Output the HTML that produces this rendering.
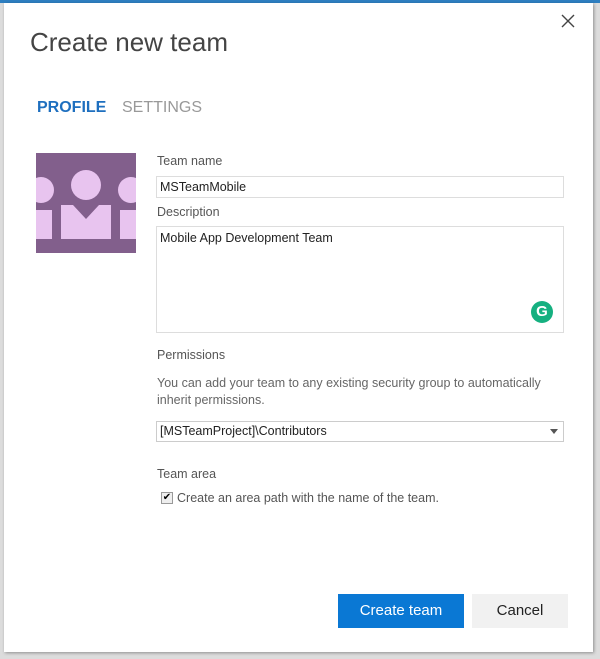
<!DOCTYPE html>
<html><head><style>
body{margin:0;width:600px;height:659px;background:#dcdcdc;position:relative;overflow:hidden;font-family:"Segoe UI","Liberation Sans",sans-serif;}
.topbar{position:absolute;left:0;top:0;width:600px;height:3px;background:#2e7fc1}
.dlg{position:absolute;left:4px;top:3px;width:589px;height:649px;background:#fff;box-shadow:1px 1px 3px rgba(0,0,0,.35)}
.a{position:absolute;white-space:nowrap}
.lbl{font-size:12.5px;color:#555}
.inp{position:absolute;border:1px solid #ddd;background:#fff;font-size:12.5px;color:#222;box-sizing:border-box;padding-left:3px}
</style></head><body>
<div class="topbar"></div>
<div class="dlg">
<div class="a" style="left:26px;top:24px;font-size:26px;color:#444;font-weight:300">Create new team</div>
<svg class="a" style="left:557px;top:11px" width="14" height="14"><path d="M1 1L13 13M13 1L1 13" stroke="#444" stroke-width="1.4"/></svg>
<div class="a" style="left:33px;top:96px;font-size:16px;color:#1e6fbf;font-weight:bold">PROFILE</div>
<div class="a" style="left:118px;top:96px;font-size:16px;color:#999">SETTINGS</div>
<svg class="a" style="left:32px;top:150px" width="100" height="100"><rect width="100" height="100" fill="#825f8c"/>
<g fill="#e8c4ef"><circle cx="50" cy="32" r="15"/><path d="M25 52H75V86H25Z" fill="#e8c4ef"/><path d="M37 52L50 66L63 52Z" fill="#825f8c"/>
<circle cx="5" cy="37" r="13"/><rect x="0" y="57" width="16" height="29"/><circle cx="95" cy="37" r="13"/><rect x="84" y="57" width="16" height="29"/></g>
<path d="M0 50L8 57H0Z M100 50L92 57H100Z" fill="#825f8c"/></svg>
<div class="a lbl" style="left:153px;top:151px">Team name</div>
<div class="inp" style="left:152px;top:173px;width:408px;height:22px;line-height:20px">MSTeamMobile</div>
<div class="a lbl" style="left:153px;top:202px">Description</div>
<div class="inp" style="left:152px;top:223px;width:408px;height:107px;padding-top:4px">Mobile App Development Team</div>
<div class="a" style="left:527px;top:298px;width:22px;height:22px;border-radius:50%;background:#15b080;color:#fff;font-size:15px;font-weight:bold;text-align:center;line-height:22px">G</div>
<div class="a lbl" style="left:153px;top:345px">Permissions</div>
<div class="a lbl" style="left:153px;top:372px;line-height:17px;color:#666">You can add your team to any existing security group to automatically<br>inherit permissions.</div>
<div class="inp" style="left:152px;top:418px;width:408px;height:21px;line-height:19px;border-color:#ccc">[MSTeamProject]\Contributors</div>
<svg class="a" style="left:546px;top:426px" width="8" height="5"><path d="M0 0H8L4 5Z" fill="#555"/></svg>
<div class="a lbl" style="left:153px;top:464px">Team area</div>
<div class="a" style="left:157px;top:489px;width:10px;height:10px;border:1px solid #999;background:#eee;font-size:10px;line-height:10px;text-align:center">✔</div>
<div class="a lbl" style="left:173px;top:488px">Create an area path with the name of the team.</div>
<div class="a" style="left:334px;top:591px;width:126px;height:34px;background:#0a78d4;color:#fff;font-size:15px;text-align:center;line-height:33px">Create team</div>
<div class="a" style="left:468px;top:591px;width:96px;height:34px;background:#f1f1f1;color:#222;font-size:15px;text-align:center;line-height:33px">Cancel</div>
</div>
</body></html>
